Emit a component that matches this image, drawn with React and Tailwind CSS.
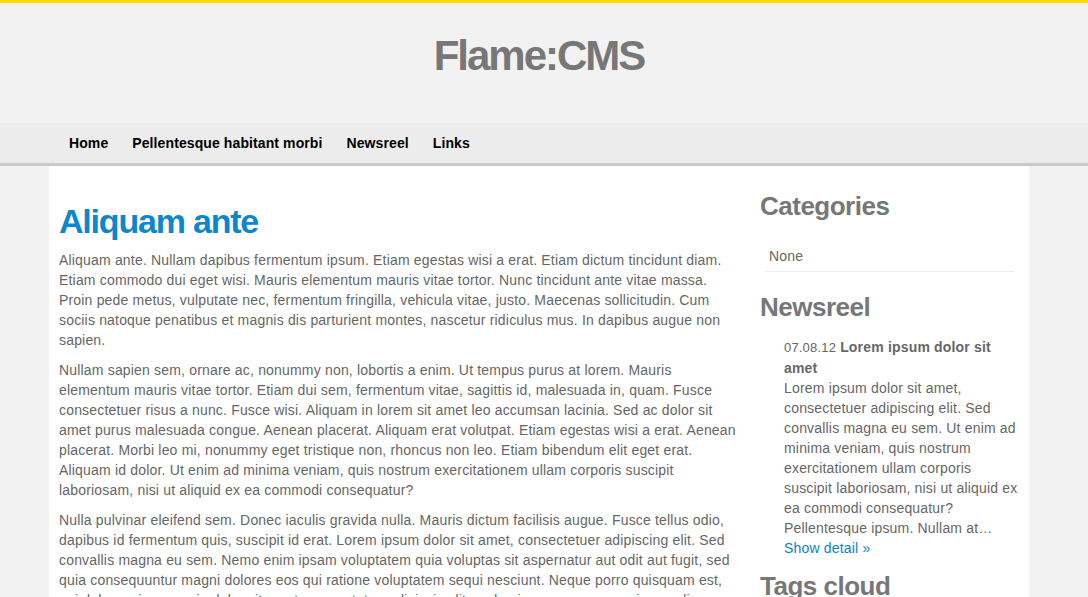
import React from "react";

const NAV = ["Home", "Pellentesque habitant morbi", "Newsreel", "Links"];

const PARAGRAPHS = [
  "Aliquam ante. Nullam dapibus fermentum ipsum. Etiam egestas wisi a erat. Etiam dictum tincidunt diam. Etiam commodo dui eget wisi. Mauris elementum mauris vitae tortor. Nunc tincidunt ante vitae massa. Proin pede metus, vulputate nec, fermentum fringilla, vehicula vitae, justo. Maecenas sollicitudin. Cum sociis natoque penatibus et magnis dis parturient montes, nascetur ridiculus mus. In dapibus augue non sapien.",
  "Nullam sapien sem, ornare ac, nonummy non, lobortis a enim. Ut tempus purus at lorem. Mauris elementum mauris vitae tortor. Etiam dui sem, fermentum vitae, sagittis id, malesuada in, quam. Fusce consectetuer risus a nunc. Fusce wisi. Aliquam in lorem sit amet leo accumsan lacinia. Sed ac dolor sit amet purus malesuada congue. Aenean placerat. Aliquam erat volutpat. Etiam egestas wisi a erat. Aenean placerat. Morbi leo mi, nonummy eget tristique non, rhoncus non leo. Etiam bibendum elit eget erat. Aliquam id dolor. Ut enim ad minima veniam, quis nostrum exercitationem ullam corporis suscipit laboriosam, nisi ut aliquid ex ea commodi consequatur?",
  "Nulla pulvinar eleifend sem. Donec iaculis gravida nulla. Mauris dictum facilisis augue. Fusce tellus odio, dapibus id fermentum quis, suscipit id erat. Lorem ipsum dolor sit amet, consectetuer adipiscing elit. Sed convallis magna eu sem. Nemo enim ipsam voluptatem quia voluptas sit aspernatur aut odit aut fugit, sed quia consequuntur magni dolores eos qui ratione voluptatem sequi nesciunt. Neque porro quisquam est, qui dolorem ipsum quia dolor sit amet, consectetur, adipisci velit, sed quia non numquam eius modi tempora incidunt ut labore et dolore magnam aliquam quaerat voluptatem.",
];

function SideTitle({ children, className = "" }) {
  return (
    <h2 className={`text-[26px] leading-[30px] font-bold tracking-[-0.5px] text-[#777] ${className}`}>
      {children}
    </h2>
  );
}

export default function App() {
  return (
    <div className="min-h-screen bg-[#f2f2f2] border-t-[3px] border-[#ffdb00] font-['Liberation_Sans',Arial,sans-serif] text-[14px] leading-[20px] tracking-[0.18px] text-[#666]">
      {/* Site header */}
      <header className="h-[120px] flex justify-center pr-[10px]">
        <h1 className="mt-[28px] text-[42px] leading-[50px] font-bold tracking-[-2px] text-[#777]">Flame:CMS</h1>
      </header>

      {/* Main navigation */}
      <nav className="h-[43px] bg-[#ececec] border-b-[3px] border-[#c9c9c9]">
        <ul className="flex items-center h-[40px] pl-[57px]">
          {NAV.map((item) => (
            <li key={item}>
              <a href="#" className="px-3 text-[14px] font-bold tracking-[0.1px] text-black">{item}</a>
            </li>
          ))}
        </ul>
      </nav>

      <div className="w-[980px] ml-[49px] bg-white px-[10px] flex gap-[21px] min-h-[500px]">
        {/* Article */}
        <main className="w-[680px]">
          <h1 className="mt-[35px] mb-[9px] text-[34px] leading-[40px] font-bold tracking-[-1.2px] text-[#0d87cc]">Aliquam ante</h1>
          {PARAGRAPHS.map((p, i) => (
            <p key={i} className="mb-[10px]">{p}</p>
          ))}
        </main>

        {/* Sidebar */}
        <aside className="w-[259px]">
          <SideTitle className="mt-[25px]">Categories</SideTitle>
          <ul className="mt-[25px] ml-1 mr-[5px]">
            <li className="pl-[5px] pb-[5px] border-b border-[#eee]">None</li>
          </ul>

          <SideTitle className="mt-[20px]">Newsreel</SideTitle>
          <ul className="mt-[15px] pl-[24px] mr-[-2px]">
            <li>
              <span className="text-[13px]">07.08.12</span>{" "}
              <strong className="font-bold">Lorem ipsum dolor sit amet</strong>
              <p>
                Lorem ipsum dolor sit amet, consectetuer adipiscing elit. Sed convallis magna eu sem. Ut enim ad minima veniam, quis nostrum exercitationem ullam corporis suscipit laboriosam, nisi ut aliquid ex ea commodi consequatur? Pellentesque ipsum. Nullam at…
              </p>
              <a href="#" className="text-[#0d7fc9]">Show detail »</a>
            </li>
          </ul>

          <SideTitle className="mt-[13px]">Tags cloud</SideTitle>
        </aside>
      </div>
    </div>
  );
}
